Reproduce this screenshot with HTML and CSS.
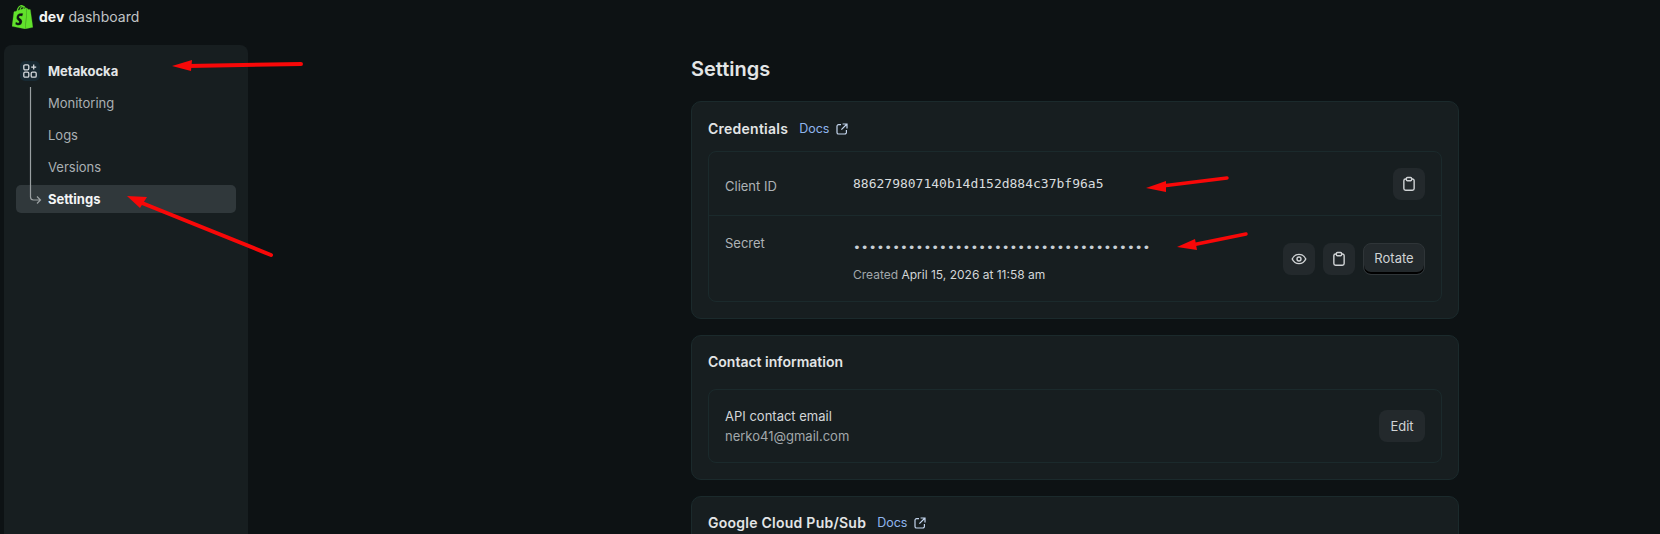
FILE: index.html
```html
<!DOCTYPE html>
<html lang="en">
<head>
<meta charset="utf-8">
<title>Settings · dev dashboard</title>
<link rel="stylesheet" href="styles.css">
</head>
<body>
<svg width="0" height="0" class="defs" aria-hidden="true">
  <symbol id="i-clip" viewBox="0 0 16 16">
    <path d="M5.400 3H4.600a1.750 1.750 0 0 0-1.750 1.750v7.700C2.850 13.400 3.600 14.200 4.600 14.200h6.800c1 0 1.750-.8 1.750-1.750v-7.700A1.750 1.750 0 0 0 11.400 3h-.8" fill="none" stroke="currentColor" stroke-width="1.400"/>
    <rect x="5.400" y="1.500" width="5.200" height="3.200" rx="1" fill="none" stroke="currentColor" stroke-width="1.400"/>
  </symbol>
  <symbol id="i-ext" viewBox="0 0 12 12">
    <path d="M5 1.600H2.600A1.600 1.600 0 0 0 1 3.200v6.200A1.600 1.600 0 0 0 2.600 11h6.200a1.600 1.600 0 0 0 1.600-1.600V7M6.600 1h4.400v4.400M11 1 5.400 6.600" fill="none" stroke="currentColor" stroke-width="1.200"/>
  </symbol>
</svg>

<header class="topbar">
  <svg class="logo" viewBox="1.400 0 21.200 24" aria-hidden="true"><path fill="#62e22c" stroke="#62e22c" stroke-width=".25" fill-rule="evenodd" d="M15.337 23.979l7.216-1.561s-2.604-17.613-2.625-17.730c-.018-.116-.114-.192-.211-.192s-1.929-.136-1.929-.136-1.275-1.274-1.439-1.411c-.045-.037-.075-.057-.121-.074l-.914 21.104h.023zM11.710 11.305s-.81-.424-1.774-.424c-1.447 0-1.504.906-1.504 1.141 0 1.232 3.240 1.715 3.240 4.629 0 2.295-1.440 3.760-3.406 3.760-2.354 0-3.540-1.465-3.540-1.465l.646-2.086s1.245 1.066 2.280 1.066c.675 0 .975-.545.975-.932 0-1.619-2.654-1.694-2.654-4.359-.034-2.237 1.571-4.416 4.827-4.416 1.257 0 1.875.361 1.875.361l-.945 2.715-.02.01zM11.170.83c.136 0 .271.038.405.135-.984.465-2.064 1.639-2.508 3.992-.656.213-1.293.405-1.889.578C7.697 3.750 8.951.84 11.170.84V.83zm1.235 2.949v.135c-.754.232-1.583.484-2.394.736.466-1.777 1.333-2.645 2.085-2.971.193.501.309 1.176.309 2.100zm.539-2.234c.694.074 1.141.867 1.429 1.755-.349.114-.735.231-1.158.366v-.252c0-.752-.096-1.371-.271-1.871v.002zm2.992 1.289c-.02 0-.06.021-.078.021s-.289.075-.714.21c-.423-1.233-1.176-2.370-2.508-2.370h-.115C12.135.209 11.669 0 11.265 0 8.159 0 6.675 3.877 6.210 5.846c-1.194.365-2.063.636-2.160.674-.675.213-.694.232-.772.87-.075.462-1.830 14.063-1.830 14.063L15.009 24l.927-21.166z"/></svg>
  <span class="brand"><b>dev</b> dashboard</span>
</header>

<div class="layout">
  <aside class="sidebar">
    <nav class="nav">
      <svg class="tree" width="16" height="122" viewBox="0 0 16 122" aria-hidden="true"><path d="M1.500 0v110a3 3 0 0 0 3 3H11M8 109.500l3.500 3.500L8 116.500" fill="none" stroke="#9aa0a2" stroke-width="1.200"/></svg>
      <a class="nav-app">
        <span class="app-icon">
          <svg width="14" height="14" viewBox="0 0 14 14" aria-hidden="true"><g fill="none" stroke="#d5dade" stroke-width="1.300"><rect x=".8" y=".8" width="5" height="5" rx="1.200"/><rect x=".8" y="8.200" width="5" height="5" rx="1.200"/><rect x="8.200" y="8.200" width="5" height="5" rx="1.200"/><path d="M10.700 .6v5M8.200 3.100h5"/></g></svg>
        </span>
        Metakocka
      </a>
      <a class="nav-item">Monitoring</a>
      <a class="nav-item">Logs</a>
      <a class="nav-item">Versions</a>
      <a class="nav-item nav-active">Settings</a>
    </nav>
  </aside>

  <main class="main">
    <h1 class="title">Settings</h1>

    <section class="card">
      <div class="card-head head-tight tracked">
        <h2>Credentials</h2>
        <a class="docs">Docs <svg width="12" height="12"><use href="#i-ext"/></svg></a>
      </div>
      <div class="inner">
        <div class="row row-id">
          <div class="label">Client ID</div>
          <div class="value"><code class="mono">886279807140b14d152d884c37bf96a5</code></div>
          <div class="actions">
            <button class="icon-btn"><svg width="16" height="16"><use href="#i-clip"/></svg></button>
          </div>
        </div>
        <div class="row row-secret">
          <div class="label">Secret</div>
          <div class="value">
            <code class="mono dots">••••••••••••••••••••••••••••••••••••••</code>
            <div class="created">Created <span>April 15, 2026 at 11:58 am</span></div>
          </div>
          <div class="actions">
            <button class="icon-btn"><svg width="16" height="16" viewBox="0 0 16 16"><g fill="none" stroke="currentColor" stroke-width="1.400"><path d="M1.200 8C2.600 5 5 3.400 8 3.400S13.400 5 14.800 8c-1.400 3-3.800 4.600-6.800 4.600S2.600 11 1.200 8Z"/><circle cx="8" cy="8" r="2"/></g></svg></button>
            <button class="icon-btn"><svg width="16" height="16"><use href="#i-clip"/></svg></button>
            <button class="btn btn-raised">Rotate</button>
          </div>
        </div>
      </div>
    </section>

    <section class="card">
      <div class="card-head">
        <h2>Contact information</h2>
      </div>
      <div class="inner">
        <div class="row row-contact">
          <div class="contact">
            <div class="contact-name">API contact email</div>
            <div class="contact-mail">nerko41@gmail.com</div>
          </div>
          <div class="actions">
            <button class="btn btn-edit">Edit</button>
          </div>
        </div>
      </div>
    </section>

    <section class="card">
      <div class="card-head tracked">
        <h2>Google Cloud Pub/Sub</h2>
        <a class="docs">Docs <svg width="12" height="12"><use href="#i-ext"/></svg></a>
      </div>
    </section>
  </main>
</div>

<svg class="arrows" width="1660" height="534" viewBox="0 0 1660 534" aria-hidden="true">
  <g stroke="#f80808" stroke-linecap="round" fill="none">
    <path stroke-width="4" d="M301 64 188 66"/>
    <path stroke-width="4" d="M271 255 142 203"/>
    <path stroke-width="3.500" d="M1227 178 1162 186"/>
    <path stroke-width="3.500" d="M1246 234 1192 245"/>
  </g>
  <g fill="#f80808">
    <path d="M172 66 192 60 191 71Z"/>
    <path d="M127 196 147 197 140 208Z"/>
    <path d="M1146 188 1166 181 1166 192Z"/>
    <path d="M1177 247 1195 239 1197 250Z"/>
  </g>
</svg>
</body>
</html>
```

FILE: styles.css
```css
* { box-sizing: border-box; }
html, body { height: 100%; }
body {
  margin: 0;
  background: #0d1214;
  color: #e3e5e6;
  font-family: Inter, "Liberation Sans", sans-serif;
  font-size: 13px;
  line-height: 20px;
  overflow: hidden;
  display: flex;
  flex-direction: column;
  position: relative;
}
.defs { position: absolute; }

.topbar {
  flex: 0 0 45px;
  display: flex;
  align-items: flex-start;
  gap: 6px;
  padding: 5px 12px 0;
}
.logo { width: 21px; height: 24px; flex: none; }
.brand { font-size: 14px; line-height: 24px; color: #c0c4c6; letter-spacing: .04px; }
.brand b { font-weight: 700; color: #f2f3f3; }

.layout { flex: 1; display: flex; min-height: 0; padding-left: 4px; overflow: hidden; }
.sidebar {
  flex: 0 0 244px;
  background: #171e20;
  border-radius: 8px 8px 0 0;
  padding: 12px;
}
.nav { position: relative; display: flex; flex-direction: column; gap: 4px; }
.tree { position: absolute; left: 13px; top: 30px; z-index: 1; }
.nav-app, .nav-item {
  display: flex;
  align-items: center;
  height: 28px;
  border-radius: 5px;
}
.nav-app { padding-left: 4px; gap: 8px; font-weight: 650; color: #e3e6e8; }
.app-icon {
  width: 20px;
  height: 20px;
  border-radius: 5px;
  background: #182a33;
  display: flex;
  align-items: center;
  justify-content: center;
}
.nav-item { padding-left: 32px; color: #aab0b3; }
.nav-active { background: #30383b; color: #f4f5f5; font-weight: 650; }

.main { flex: 1; padding: 12px 0 0 443px; min-width: 0; overflow: hidden; }
.title { margin: 0 0 20px; font-size: 20px; line-height: 24px; font-weight: 600; color: #e3e5e6; }

.card {
  width: 768px;
  margin-bottom: 16px;
  background: #171e20;
  border: 1px solid #1b2a2c;
  border-radius: 10px;
  padding: 16px;
}
.card-head {
  display: flex;
  align-items: center;
  gap: 11px;
  height: 20px;
  margin-bottom: 17px;
}
.head-tight { margin-top: 1px; margin-bottom: 12px; }
.card-head h2 { margin: 0; font-size: 14px; line-height: 20px; font-weight: 600; color: #e3e5e6; }
.tracked h2 { letter-spacing: .25px; }
.docs { display: flex; align-items: center; gap: 7px; font-size: 12.500px; color: #8fb5ee; }
.docs svg { color: #c4d6ee; }

.inner { border: 1px solid #1b2a2c; border-radius: 8px; }
.row { display: flex; align-items: center; padding: 16px; }
.row-id { height: 64px; border-bottom: 1px solid #1b2a2c; }
.row-secret { height: 85px; }
.row-contact { height: 72px; justify-content: space-between; }
.label { flex: 0 0 128px; color: #aeb3b6; }
.row-id .label { padding-top: 5px; }
.row-secret .label { align-self: flex-start; padding-top: 1px; }
.value { flex: 1; min-width: 0; }
.mono {
  display: block;
  font-family: "DejaVu Sans Mono", "Liberation Mono", monospace;
  font-size: 13px;
  color: #d8dcde;
}
.dots { line-height: 30px; margin-bottom: 2px; color: #c8cfd4; }
.created { font-size: 12px; color: #a2a8ab; }
.created span { color: #d3d6d8; }
.actions { display: flex; gap: 8px; flex: none; }
.icon-btn, .btn {
  height: 32px;
  border: 0;
  border-radius: 8px;
  background: #23292c;
  color: #d0d3d5;
  font: inherit;
  display: flex;
  align-items: center;
  justify-content: center;
  padding: 0;
}
.icon-btn { width: 32px; }
.btn-edit { width: 46px; }
.btn-raised {
  width: 62px;
  border: 1px solid #2f3538;
  box-shadow: inset 0 -2px 0 #000;
  padding-bottom: 2px;
}
.contact-name { color: #d3d6d8; }
.contact-mail { color: #a2a8ab; }

.arrows { position: absolute; left: 0; top: 0; z-index: 5; pointer-events: none; }
```
